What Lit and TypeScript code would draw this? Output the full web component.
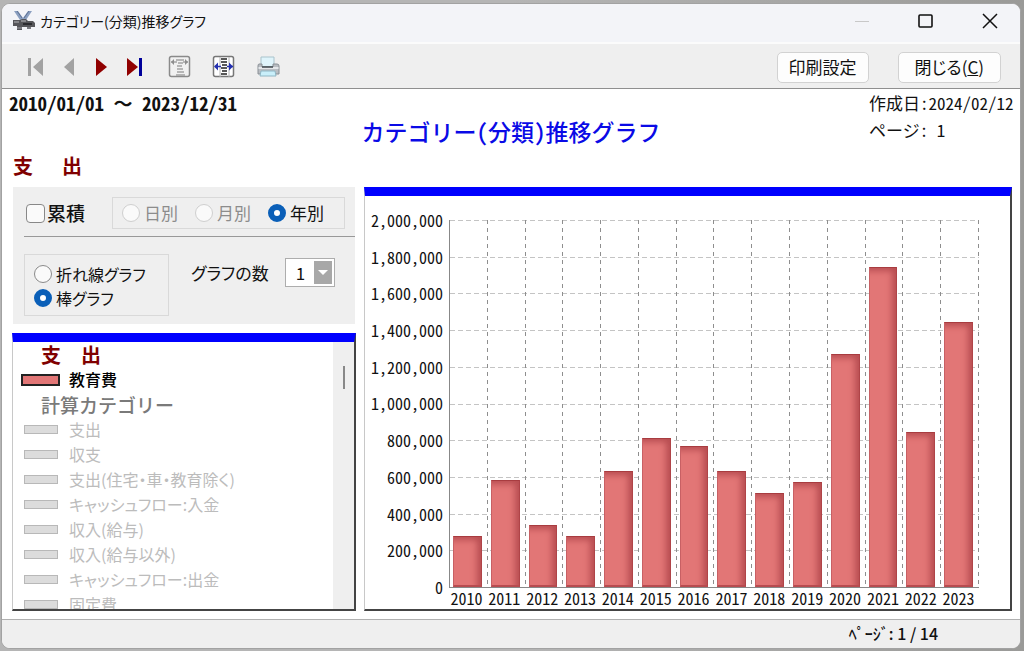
import { LitElement, html, svg, css } from "lit";
import { customElement, property } from "lit/decorators.js";

const AXIS_MAX = 2000000;
const AXIS_STEP = 200000;

const YEARS: { year: number; value: number }[] = [
  { year: 2010, value: 280000 },
  { year: 2011, value: 583000 },
  { year: 2012, value: 340000 },
  { year: 2013, value: 280000 },
  { year: 2014, value: 634000 },
  { year: 2015, value: 813000 },
  { year: 2016, value: 770000 },
  { year: 2017, value: 634000 },
  { year: 2018, value: 514000 },
  { year: 2019, value: 574000 },
  { year: 2020, value: 1270000 },
  { year: 2021, value: 1745000 },
  { year: 2022, value: 846000 },
  { year: 2023, value: 1444000 },
];

const CALC_ITEMS = [
  "支出",
  "収支",
  "支出(住宅・車・教育除く)",
  "キャッシュフロー:入金",
  "収入(給与)",
  "収入(給与以外)",
  "キャッシュフロー:出金",
  "固定費",
];

@customElement("bar-chart")
class BarChart extends LitElement {
  @property({ attribute: false }) data: { year: number; value: number }[] = [];

  static styles = css`
    :host {
      display: grid;
      grid-template-columns: 78px 1fr;
      grid-template-rows: 1fr 21px;
      column-gap: 6px;
      padding: 24px 31px 0 0;
      font-size: 16px;
      font-feature-settings: "hwid";
      color: #111;
    }
    .scale {
      display: flex;
      flex-direction: column;
      justify-content: space-between;
      margin: -10px 0 -9px;
      text-align: right;
      line-height: 20px;
    }
    .plot {
      display: grid;
      border-left: 1px solid #888;
      border-bottom: 1px solid #888;
      min-height: 0;
    }
    .rows,
    .columns {
      grid-area: 1 / 1;
      display: flex;
      min-height: 0;
    }
    .rows {
      flex-direction: column;
    }
    .rows span {
      flex: 1;
      background: repeating-linear-gradient(90deg, #c4c4c4 0 5px, transparent 5px 8px) top / 100% 1px no-repeat;
    }
    .column {
      flex: 1;
      display: flex;
      align-items: flex-end;
      padding: 0 6px 0 3px;
      background: repeating-linear-gradient(180deg, #8e8e8e 0 4px, transparent 4px 8px) right / 1px 100% no-repeat;
    }
    .bar {
      flex: 1;
      box-sizing: border-box;
      background: #e27676;
      border-top: 1px solid #a83c40;
      border-right: 1px solid #b04448;
      border-bottom: 2px solid #b84c50;
      border-left: 1px solid #c86064;
      box-shadow: inset -6px 5px 6px -2px #b84e52;
    }
    .years {
      grid-column: 2;
      display: flex;
      line-height: 20px;
    }
    .years span {
      flex: 1;
      padding-right: 3px;
      text-align: center;
    }
  `;

  render() {
    const ticks: number[] = [];
    for (let v = AXIS_MAX; v >= 0; v -= AXIS_STEP) ticks.push(v);
    return html`
      <div class="scale">${ticks.map((t) => html`<span>${t.toLocaleString("en-US")}</span>`)}</div>
      <div class="plot">
        <div class="rows">${ticks.slice(1).map(() => html`<span></span>`)}</div>
        <div class="columns">
          ${this.data.map(
            (d) => html`<div class="column"><div class="bar" style="height:${(d.value / AXIS_MAX) * 100}%"></div></div>`
          )}
        </div>
      </div>
      <div class="years">${this.data.map((d) => html`<span>${d.year}</span>`)}</div>
    `;
  }
}

const appIcon = svg`
  <path d="M2 1h4l5 7 5-7h4l-6 9H8z" fill="#8a9fc0"/>
  <path d="M5 1l5 7M17 1l-5 7" stroke="#5f7396" stroke-width="1"/>
  <path d="M1 10h7l2-1h4l2 2h5l2 2v4h-4v2h-4v-2h-5v3H5v-4H1z" fill="#56565a"/>
  <path d="M2 12h5M9 11h5" stroke="#98989c" stroke-width="1.5"/>
  <path d="M11 14h9" stroke="#2c2c30" stroke-width="2"/>
  <path d="M5 18h5M15 18h4" stroke="#7a7a80" stroke-width="2"/>`;

@customElement("app-root")
class AppRoot extends LitElement {
  static styles = css`
    :host {
      display: flex;
      box-sizing: border-box;
      height: 100vh;
      padding: 3px 3px 2px 1px;
      background: linear-gradient(90deg, #b5b5b5 0 50%, #9a9a98 100%);
      font-family: "Noto Sans CJK JP", sans-serif;
      font-size: 16px;
      line-height: 24px;
      color: #111;
    }
    * {
      box-sizing: border-box;
    }
    svg {
      display: block;
    }
    button,
    select {
      font: inherit;
      color: inherit;
    }
    input {
      appearance: none;
      margin: 0;
      flex: none;
      background: #fafafa;
    }
    .window {
      flex: 1;
      display: flex;
      flex-direction: column;
      min-width: 0;
      overflow: hidden;
      border: 1px solid #a2a2a2;
      border-radius: 9px;
      background: #fff;
    }
    .titlebar {
      display: flex;
      align-items: center;
      flex: none;
      height: 40px;
      padding: 0 13px 4px 10px;
      background: #f3f4f8;
      border-bottom: 2px solid #fbfbfb;
    }
    .titlebar h1 {
      flex: 1;
      margin: 0 0 0 4px;
      font-size: 14px;
      font-weight: 400;
      font-feature-settings: "palt";
    }
    .caption {
      display: flex;
      gap: 30px;
    }
    .icon {
      padding: 0;
      border: 0;
      background: none;
    }
    .caption .icon {
      padding: 0 6px;
    }
    .toolbar {
      display: flex;
      align-items: center;
      flex: none;
      height: 45px;
      padding: 2px 19px 0 24px;
      background: #efefef;
      border-bottom: 1px solid #8f8f8f;
    }
    .nav,
    .tools {
      display: flex;
      align-items: center;
    }
    .nav {
      gap: 13px;
    }
    .tools {
      flex: 1;
      gap: 20px;
      margin-left: 23px;
    }
    .action {
      height: 31px;
      margin-left: 29px;
      padding: 0 11px;
      border: 1px solid #d2d2d2;
      border-radius: 5px;
      background: #fdfdfd;
      font-size: 17px;
      line-height: 28px;
      font-feature-settings: "palt";
    }
    .close {
      padding: 0 16px;
    }
    .header {
      display: grid;
      grid-template-columns: 1fr auto 1fr;
      grid-template-rows: 59px 39px;
      flex: none;
      padding: 0 7px 0 7px;
      font-feature-settings: "hwid";
    }
    .period {
      font-size: 19px;
      font-weight: 700;
      line-height: 27px;
      white-space: pre;
    }
    .wave {
      font-feature-settings: normal;
    }
    .title {
      align-self: end;
      margin: 0;
      font-size: 23px;
      font-weight: 500;
      line-height: 34px;
      color: #0a0ae6;
    }
    .meta {
      justify-self: end;
      width: 144px;
      font-size: 17px;
      line-height: 27px;
    }
    .meta div {
      white-space: pre;
    }
    .section {
      display: flex;
      gap: 29px;
      grid-row: 2;
      margin: 0;
      padding-left: 4px;
      font-size: 20px;
      font-weight: 700;
      line-height: 36px;
      color: #800000;
    }
    .body {
      flex: 1;
      display: grid;
      grid-template-columns: 344px 1fr;
      gap: 8px;
      min-height: 0;
      padding: 0 8px 8px 10px;
    }
    .side {
      display: flex;
      flex-direction: column;
      gap: 9px;
      min-height: 0;
    }
    .panel {
      flex: none;
      margin: 0 1px;
      padding: 10px 0 8px 11px;
      background: #efefef;
      font-feature-settings: "palt";
    }
    .row {
      display: flex;
      align-items: center;
    }
    .spread {
      padding-bottom: 7px;
      border-bottom: 1px solid #999;
      margin-bottom: 17px;
    }
    .group {
      display: flex;
      margin: 0;
      padding: 0;
      border: 1px solid #d9d9d9;
    }
    .units {
      gap: 17px;
      width: 233px;
      height: 32px;
      margin-right: 10px;
      padding-left: 9px;
      font-size: 17px;
    }
    .kinds {
      flex-direction: column;
      width: 145px;
      height: 62px;
      padding: 7px 9px;
    }
    label {
      display: flex;
      align-items: center;
      gap: 4px;
    }
    .sum {
      flex: 1;
      gap: 2px;
      padding-left: 2px;
      font-size: 19px;
      font-weight: 500;
    }
    .sum input {
      width: 19px;
      height: 19px;
      border: 1px solid #888;
      border-radius: 4px;
    }
    input[type="radio"] {
      width: 18px;
      height: 18px;
      border: 1px solid #8a8a8a;
      border-radius: 50%;
    }
    input[type="radio"]:checked {
      border: 6px solid #0a5fb8;
      background: #fff;
    }
    input[type="radio"]:disabled {
      border-color: #cfcfcf;
    }
    .off {
      color: #8c8c8c;
    }
    .count {
      align-self: flex-start;
      margin: 4px 0 0 22px;
      gap: 16px;
      font-size: 17px;
    }
    .picker {
      display: grid;
      width: 50px;
      height: 29px;
      padding: 2px;
      border: 1px solid #adadad;
      background: #fff;
    }
    .picker select,
    .picker svg {
      grid-area: 1 / 1;
    }
    .picker select {
      appearance: none;
      padding: 0 0 0 8px;
      border: 0;
      background: none;
      font-size: 17px;
    }
    .picker svg {
      justify-self: end;
      pointer-events: none;
    }
    .frame {
      min-height: 0;
      border: 1px solid #c8c8c8;
      border-top: 9px solid #00f;
      border-right: 2px solid #444;
      border-bottom: 2px solid #444;
      background: #fff;
    }
    .list {
      flex: 1;
      display: grid;
      grid-template-columns: 1fr 21px;
      overflow: hidden;
    }
    .items {
      margin: 0;
      padding: 0;
      min-height: 0;
      list-style: none;
      line-height: 25px;
      font-feature-settings: "palt";
    }
    .items li {
      display: flex;
      align-items: center;
      height: 25px;
    }
    .items .head {
      padding-left: 28px;
      font-size: 20px;
      font-weight: 700;
      color: #800000;
      font-feature-settings: normal;
    }
    .items .calc {
      font-size: 19px;
      font-weight: 500;
      color: #7a7a7a;
    }
    .swatch {
      width: 34px;
      height: 9px;
      margin: 0 11px;
      border: 1px solid #b8b8b8;
      background: #dcdcdc;
    }
    .items .active {
      color: #000;
      font-weight: 500;
    }
    .active .swatch {
      width: 39px;
      height: 12px;
      margin: 0 9px 0 8px;
      border: 2px solid #222;
      background: #e27676;
    }
    .items .item {
      color: #bcbcbc;
    }
    .track {
      display: flex;
      justify-content: center;
      padding-top: 24px;
      background: #efefef;
    }
    .thumb {
      width: 2px;
      height: 23px;
      background: #888;
    }
    .status {
      flex: none;
      height: 29px;
      padding: 0 82px 0 0;
      border-top: 1px solid #b0b0b0;
      background: #efefef;
      text-align: right;
      line-height: 26px;
      font-weight: 500;
    }
  `;

  render() {
    return html`
      <main class="window">
        <header class="titlebar">
          <svg width="24" height="22" viewBox="0 0 24 22">${appIcon}</svg>
          <h1>カテゴリー(分類)推移グラフ</h1>
          <div class="caption">
            <button class="icon" aria-label="最小化">
              <svg width="22" height="22" viewBox="0 0 22 22"><path d="M4 11.500h14" stroke="#c8c8c8" fill="none" /></svg>
            </button>
            <button class="icon" aria-label="最大化">
              <svg width="22" height="22" viewBox="0 0 22 22">
                <rect x="4" y="5" width="13" height="12" rx="1" fill="none" stroke="#111" stroke-width="1.600" />
              </svg>
            </button>
            <button class="icon" aria-label="閉じる">
              <svg width="22" height="22" viewBox="0 0 22 22">
                <path d="M4 4l14 14M18 4L4 18" stroke="#111" stroke-width="1.500" fill="none" />
              </svg>
            </button>
          </div>
        </header>

        <nav class="toolbar">
          <div class="nav">
            <button class="icon" aria-label="最初">
              <svg width="20" height="20" viewBox="0 0 20 20">
                <path d="M2 1h3v18H2zM17 1v18L7 10z" fill="#a2a2a2" />
              </svg>
            </button>
            <button class="icon" aria-label="前へ">
              <svg width="20" height="20" viewBox="0 0 20 20"><path d="M15 1v18L5 10z" fill="#a2a2a2" /></svg>
            </button>
            <button class="icon" aria-label="次へ">
              <svg width="20" height="20" viewBox="0 0 20 20"><path d="M4 1v18l11-9z" fill="#900000" /></svg>
            </button>
            <button class="icon" aria-label="最後">
              <svg width="20" height="20" viewBox="0 0 20 20">
                <path d="M2 1v18l11-9z" fill="#900000" />
                <path d="M14 1h3v18h-3z" fill="#00009a" />
              </svg>
            </button>
          </div>
          <div class="tools">
            <button class="icon" aria-label="縮小">
              <svg width="24" height="24" viewBox="0 0 24 24" fill="none">
                <rect x="1.500" y="1.500" width="20" height="20" rx="2" fill="#f1f1f1" stroke="#8a8a8a" stroke-width="1.500" />
                <path d="M8 5h8M10 8h5M9 11h5M9 14h6M9 17h7M8 20h9" stroke="#a2a2a2" stroke-width="1.500" />
                <path d="M3 7h6M15 7h5" stroke="#a2a2a2" stroke-width="1.300" />
                <path d="M6 4v6L3 7zM17 4v6l3-3z" fill="#8e8e8e" />
              </svg>
            </button>
            <button class="icon" aria-label="幅調整">
              <svg width="24" height="24" viewBox="0 0 24 24" fill="none">
                <rect x="1.500" y="1.500" width="20" height="20" rx="2" fill="#fff" stroke="#777" stroke-width="1.500" />
                <path d="M8 2v20M17 2v20" stroke="#b4b4b4" />
                <path d="M9 4h6M9 7h6M10 10h5M9 13h6M10 16h5M9 19h6" stroke="#222" stroke-width="1.600" />
                <path d="M3 11.500h6M15 11.500h6" stroke="#2430b0" stroke-width="1.600" />
                <path d="M6 7.500v8l-4-4zM17 7.500v8l4-4z" fill="#2430b0" />
              </svg>
            </button>
            <button class="icon" aria-label="印刷">
              <svg width="26" height="22" viewBox="0 0 26 22">
                <path d="M5 1h13v10H5z" fill="#dff4fb" stroke="#a9c3cc" />
                <path d="M3 8h3v3h11V8h4q2 0 2 2v8H2v-8q0-2 1-2z" fill="#b9bdc2" stroke="#8a9096" />
                <path d="M2.500 11h20v2h-20z" fill="#e4e7ea" />
                <path d="M6 11h11" stroke="#3f474c" stroke-width="1.500" />
                <path d="M5 15h14l1 5H4z" fill="#c9effa" stroke="#8fb6c4" />
              </svg>
            </button>
          </div>
          <button class="action">印刷設定</button>
          <button class="action close">閉じる(<u>C</u>)</button>
        </nav>

        <section class="header">
          <div class="period">2010/01/01 <span class="wave">～</span> 2023/12/31</div>
          <h2 class="title">カテゴリー(分類)推移グラフ</h2>
          <div class="meta">
            <div>作成日:2024/02/12</div>
            <div>ページ: 1</div>
          </div>
          <h3 class="section"><span>支</span><span>出</span></h3>
        </section>

        <section class="body">
          <div class="side">
            <form class="panel">
              <div class="row spread">
                <label class="sum"><input type="checkbox" />累積</label>
                <fieldset class="group units">
                  <label class="off"><input type="radio" name="unit" disabled />日別</label>
                  <label class="off"><input type="radio" name="unit" disabled />月別</label>
                  <label><input type="radio" name="unit" checked />年別</label>
                </fieldset>
              </div>
              <div class="row">
                <fieldset class="group kinds">
                  <label><input type="radio" name="kind" />折れ線グラフ</label>
                  <label><input type="radio" name="kind" checked />棒グラフ</label>
                </fieldset>
                <label class="count">
                  グラフの数
                  <span class="picker">
                    <select><option>1</option><option>2</option><option>3</option></select>
                    <svg width="18" height="23" viewBox="0 0 18 23">
                      <rect width="18" height="23" fill="#a8a8a8" />
                      <path d="M4 9h10l-5 5z" fill="#fff" />
                    </svg>
                  </span>
                </label>
              </div>
            </form>

            <div class="frame list">
              <ul class="items">
                <li class="head">支　出</li>
                <li class="active"><span class="swatch"></span>教育費</li>
                <li class="head calc">計算カテゴリー</li>
                ${CALC_ITEMS.map((t) => html`<li class="item"><span class="swatch"></span>${t}</li>`)}
              </ul>
              <div class="track"><div class="thumb"></div></div>
            </div>
          </div>

          <bar-chart class="frame" .data=${YEARS}></bar-chart>
        </section>

        <footer class="status">ﾍﾟｰｼﾞ: 1 / 14</footer>
      </main>
    `;
  }
}
